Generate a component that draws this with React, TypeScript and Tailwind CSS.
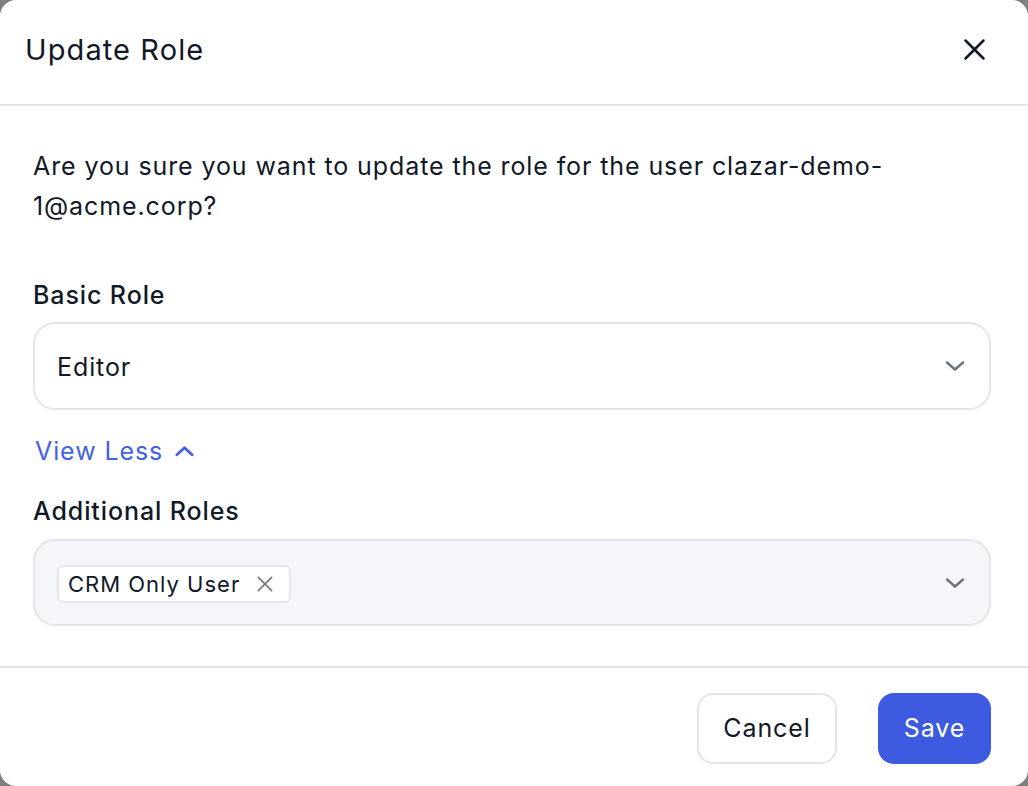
import React, { useState } from 'react';

function CloseIcon({ className }: { className?: string }) {
  return (
    <svg viewBox="0 0 24 24" fill="none" stroke="currentColor" strokeLinecap="round" className={className}>
      <path d="M4 4l16 16M20 4L4 20" />
    </svg>
  );
}

function ChevronDown({ className }: { className?: string }) {
  return (
    <svg viewBox="0 0 20 10" fill="none" stroke="currentColor" strokeWidth={2.4} strokeLinecap="round" strokeLinejoin="round" className={className}>
      <path d="M2 1.5l8 7 8-7" />
    </svg>
  );
}

function ChevronUp({ className }: { className?: string }) {
  return (
    <svg viewBox="0 0 20 12" fill="none" stroke="currentColor" strokeWidth={3} strokeLinecap="round" strokeLinejoin="round" className={className}>
      <path d="M2 10l8-7.5 8 7.5" />
    </svg>
  );
}

export default function App() {
  const [roles, setRoles] = useState(['CRM Only User']);

  return (
    <div className="w-[1028px] h-[786px] bg-[#7f7f7f] font-['Inter',sans-serif] text-[#111827]">
      <div className="w-full h-full bg-white rounded-[16px] flex flex-col overflow-hidden">
        {/* header */}
        <div className="h-[106px] shrink-0 flex items-center justify-between pl-[25px] pr-[40px] border-b-2 border-[#e4e5ea]">
          <h2 className="text-[29px] leading-none font-normal tracking-[1.1px] pb-[6px]">Update Role</h2>
          <button className="text-[#111827] pb-[6px]">
            <CloseIcon className="w-[27px] h-[27px] stroke-[2.2]" />
          </button>
        </div>

        {/* body */}
        <div className="flex-1 pl-[33px] pr-[37px] pt-[40px]">
          <p className="text-[25px] leading-[40px] tracking-[0.9px] pr-[80px]">
            Are you sure you want to update the role for the user clazar-demo-1@acme.corp?
          </p>

          <label className="block mt-[53px] text-[25px] leading-[32px] font-medium tracking-[0.9px]">Basic Role</label>
          <div className="mt-[11px] h-[88px] rounded-[22px] border-2 border-[#e4e5ea] flex items-center justify-between pl-[22px] pr-[24px]">
            <span className="text-[25px] tracking-[0.9px] pt-[3px]">Editor</span>
            <ChevronDown className="w-[20px] h-[10px] text-[#6b7280]" />
          </div>

          <button className="mt-[25px] ml-[2px] flex items-center gap-[12px] text-[25px] leading-[32px] tracking-[0.9px] text-[#4461e4]">
            View Less
            <ChevronUp className="w-[19px] h-[12px]" />
          </button>

          <label className="block mt-[28px] text-[25px] leading-[32px] font-medium tracking-[0.9px]">Additional Roles</label>
          <div className="mt-[12px] h-[87px] rounded-[22px] border-2 border-[#e4e5ea] bg-[#f5f6fa] flex items-center justify-between pl-[22px] pr-[24px]">
            <div className="flex gap-2 pt-[2px]">
              {roles.map((r) => (
                <span
                  key={r}
                  className="h-[38px] flex items-center gap-[15px] pl-[9px] pr-[14px] bg-white border-2 border-[#e4e5ea] rounded-[6px] text-[22px] tracking-[1px]"
                >
                  <span className="pt-[2px]">{r}</span>
                  <button onClick={() => setRoles(roles.filter((x) => x !== r))} className="text-[#737780]">
                    <CloseIcon className="w-[20px] h-[20px] stroke-[2]" />
                  </button>
                </span>
              ))}
            </div>
            <ChevronDown className="w-[20px] h-[10px] text-[#6b7280]" />
          </div>
        </div>

        {/* footer */}
        <div className="h-[120px] shrink-0 border-t-2 border-[#e4e5ea] flex justify-end items-start gap-[41px] pt-[25px] pr-[37px]">
          <button className="h-[71px] w-[140px] rounded-[16px] border-2 border-[#e4e5ea] bg-white text-[25px] tracking-[0.9px]">Cancel</button>
          <button className="h-[71px] w-[113px] rounded-[16px] bg-[#3d5ae0] text-white text-[25px] tracking-[0.9px]">Save</button>
        </div>
      </div>
    </div>
  );
}
